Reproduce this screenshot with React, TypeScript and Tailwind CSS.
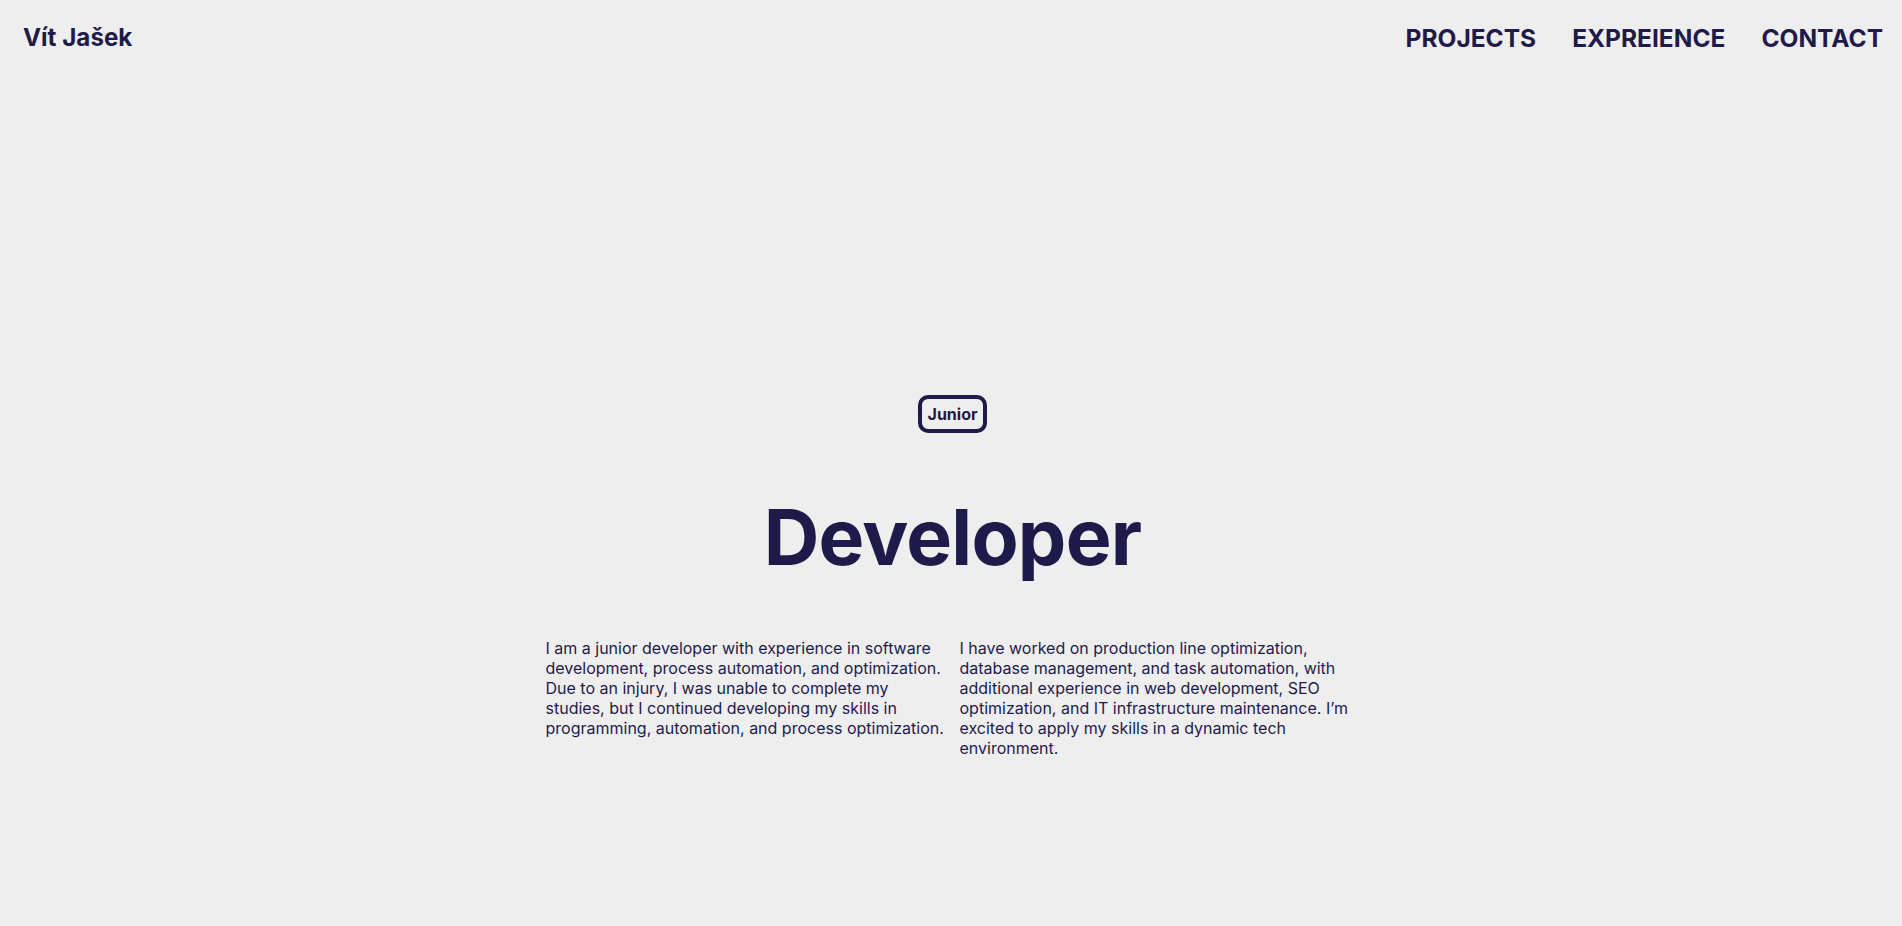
export default function App() {
  return (
    <div className="min-h-screen bg-[#eeeeee] text-[#1e1b4b] font-['Inter',sans-serif]">
      <header className="flex items-center justify-between h-[76px] pl-[23px] pr-[19px]">
        <a href="#" className="text-[24.2px] font-bold">
          Vít Jašek
        </a>
        <nav className="flex items-center gap-[36px] text-[24.5px] font-bold">
          <a href="#projects">PROJECTS</a>
          <a href="#experience">EXPREIENCE</a>
          <a href="#contact">CONTACT</a>
        </nav>
      </header>

      <main className="flex flex-col items-center pl-[3px] pt-[319px] pb-20">
        <span className="border-4 border-[#1e1b4b] rounded-[10px] px-[6px] h-[38px] flex items-center text-[16px] font-bold">
          Junior
        </span>
        <h1 className="mt-[66px] text-[77px] leading-none font-bold tracking-[-0.01em]">
          Developer
        </h1>
        <div className="mt-[62px] grid grid-cols-2 gap-[14px] w-[814px] text-[16px] leading-5">
          <p>
            I am a junior developer with experience in software development, process
            automation, and optimization. Due to an injury, I was unable to complete my
            studies, but I continued developing my skills in programming, automation,
            and process optimization.
          </p>
          <p>
            I have worked on production line optimization, database management, and
            task automation, with additional experience in web development, SEO
            optimization, and IT infrastructure maintenance. I’m excited to apply my
            skills in a dynamic tech environment.
          </p>
        </div>
      </main>
    </div>
  );
}
